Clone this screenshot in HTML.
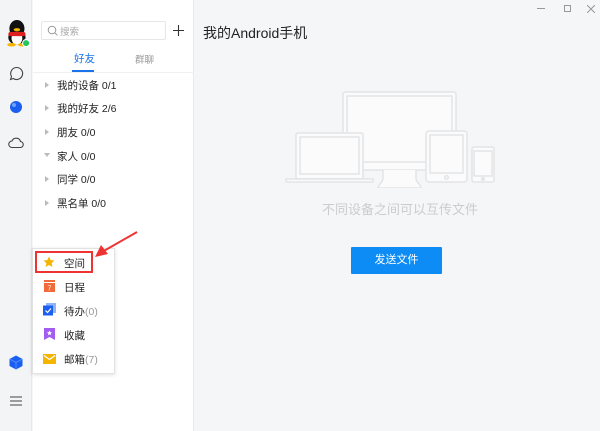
<!DOCTYPE html>
<html><head><meta charset="utf-8"><style>
*{margin:0;padding:0;box-sizing:border-box}
body{width:600px;height:431px;overflow:hidden;background:#f5f6f8;font-family:"Liberation Sans","Noto Sans CJK SC",sans-serif;position:relative;color:#222}
.abs{position:absolute}
#side{left:0;top:0;width:32px;height:431px;background:#f3f4f6;border-right:1px solid #e8e8e8}
#list{left:33px;top:0;width:161px;height:431px;background:#fff;border-right:1px solid #eaeaea}
.row{position:absolute;left:57px;font-size:10.5px;color:#222;white-space:nowrap}
.tri{position:absolute;left:45px;width:0;height:0;border-top:3px solid transparent;border-bottom:3px solid transparent;border-left:4px solid #bbb}
.mi{position:absolute;left:64px;font-size:10.5px;color:#222}
.mi span{color:#999}
</style></head><body>
<div id="side" class="abs"></div>
<div id="list" class="abs"></div>
<svg class="abs" style="left:5px;top:20px" width="26" height="28" viewBox="0 0 24 26">
<ellipse cx="11" cy="8" rx="7" ry="8" fill="#111"/>
<ellipse cx="11" cy="16" rx="8" ry="7" fill="#111"/>
<ellipse cx="11" cy="17" rx="5" ry="6" fill="#fff"/>
<rect x="3" y="11" width="16" height="4" rx="2" fill="#e02020"/>
<ellipse cx="11" cy="9" rx="3" ry="1.5" fill="#f5b400"/>
<ellipse cx="6" cy="23" rx="4" ry="1.6" fill="#f5b400"/>
<ellipse cx="16" cy="23" rx="4" ry="1.6" fill="#f5b400"/>
<circle cx="19.5" cy="21.5" r="3.3" fill="#22c55e" stroke="#fff" stroke-width="1"/>
</svg>
<svg class="abs" style="left:9px;top:66px" width="15" height="15" viewBox="0 0 15 15"><path d="M7.5 1.5a6 6 0 1 1-3.2 11L1.5 13.5l1-3A6 6 0 0 1 7.5 1.5z" fill="none" stroke="#444" stroke-width="1.1"/></svg>
<svg class="abs" style="left:9px;top:100px" width="14" height="14"><circle cx="7" cy="7" r="6" fill="#1a5ff0"/><circle cx="5" cy="5" r="2" fill="#6fa3ff"/></svg>
<svg class="abs" style="left:8px;top:136px" width="16" height="13" viewBox="0 0 16 13"><path d="M4 11.5h8a3 3 0 0 0 .5-6A4.5 4.5 0 0 0 4 5a3.2 3.2 0 0 0 0 6.5z" fill="none" stroke="#444" stroke-width="1.1"/></svg>
<svg class="abs" style="left:9px;top:355px" width="14" height="15" viewBox="0 0 14 15"><path d="M7 0.5L13.5 4v7L7 14.5 0.5 11V4z" fill="#1a5ff0"/><path d="M7 7.5L13.5 4M7 7.5L0.5 4M7 7.5v7" stroke="#4d8aff" stroke-width="1"/></svg>
<svg class="abs" style="left:10px;top:396px" width="12" height="10"><path d="M0 1h12M0 5h12M0 9h12" stroke="#444" stroke-width="1.1"/></svg>
<div class="abs" style="left:41px;top:21px;width:125px;height:19px;border:1px solid #e6e6e6;border-radius:2px;background:#fff"></div>
<svg class="abs" style="left:47px;top:25px" width="11" height="11"><circle cx="5" cy="5" r="3.8" fill="none" stroke="#999" stroke-width="1"/><path d="M7.8 7.8l2.5 2.5" stroke="#999"/></svg>
<div class="abs" style="left:60px;top:24px;font-size:9.5px;color:#aaa">搜索</div>
<svg class="abs" style="left:173px;top:25px" width="11" height="11"><path d="M5.5 0v11M0 5.5h11" stroke="#333" stroke-width="1.1"/></svg>
<div class="abs" style="left:74px;top:51px;font-size:10.5px;color:#1a73e8">好友</div>
<div class="abs" style="left:72px;top:70px;width:22px;height:2px;background:#1a73e8"></div>
<div class="abs" style="left:135px;top:52px;font-size:9.5px;color:#999">群聊</div>
<div class="abs" style="left:33px;top:72px;width:161px;height:1px;background:#f0f0f0"></div>
<div class="tri" style="top:82px"></div><div class="row" style="top:78px">我的设备 0/1</div>
<div class="tri" style="top:105px"></div><div class="row" style="top:101px">我的好友 2/6</div>
<div class="tri" style="top:129px"></div><div class="row" style="top:125px">朋友 0/0</div>
<div class="abs" style="left:44px;top:153px;border-left:3px solid transparent;border-right:3px solid transparent;border-top:4px solid #bbb"></div><div class="row" style="top:149px">家人 0/0</div>
<div class="tri" style="top:176px"></div><div class="row" style="top:172px">同学 0/0</div>
<div class="tri" style="top:200px"></div><div class="row" style="top:196px">黑名单 0/0</div>
<div class="abs" style="left:32px;top:248px;width:83px;height:126px;background:#fff;border:1px solid #e2e2e2;box-shadow:0 1px 4px rgba(0,0,0,.12)"></div>
<div class="abs" style="left:35px;top:251px;width:58px;height:22px;border:2px solid #e33"></div>
<svg class="abs" style="left:43px;top:256px" width="12" height="12" viewBox="0 0 12 12"><path d="M6 0.5l1.7 3.6 3.8.4-2.9 2.6.9 3.9L6 9 2.5 11l.9-3.9L.5 4.5l3.8-.4z" fill="#f5b400"/></svg>
<div class="mi" style="top:256px">空间</div>
<svg class="abs" style="left:44px;top:280px" width="11" height="12"><rect y="0" width="11" height="2" fill="#f06a3a"/><rect y="3" width="11" height="9" fill="#f06a3a"/><text x="3.5" y="10.5" font-size="7" fill="#fff" font-family="Liberation Sans">7</text></svg>
<div class="mi" style="top:280px">日程</div>
<svg class="abs" style="left:43px;top:303px" width="13" height="13"><rect x="3" y="0" width="10" height="10" fill="#8fb4f8"/><rect x="0" y="2.5" width="10" height="10" fill="#1a5ff0"/><path d="M2.5 7.5l2 2 3.5-4" stroke="#fff" fill="none" stroke-width="1.2"/></svg>
<div class="mi" style="top:304px">待办<span>(0)</span></div>
<svg class="abs" style="left:44px;top:328px" width="11" height="12"><path d="M0 0h11v12l-5.5-3L0 12z" fill="#a25cf0"/><path d="M5.5 2.5l.8 1.6 1.7.2-1.3 1.2.4 1.7-1.6-.9-1.6.9.4-1.7L3 4.3l1.7-.2z" fill="#fff"/></svg>
<div class="mi" style="top:328px">收藏</div>
<svg class="abs" style="left:43px;top:354px" width="13" height="10"><rect width="13" height="10" fill="#f5b400"/><path d="M1 1.5l5.5 4 5.5-4" stroke="#fff" fill="none" stroke-width="1.2"/></svg>
<div class="mi" style="top:352px">邮箱<span>(7)</span></div>
<svg class="abs" style="left:90px;top:228px" width="52" height="34"><path d="M47 4L12 24" stroke="#e33" stroke-width="2"/><path d="M5 29l6-12 7 9z" fill="#e33"/></svg>
<div class="abs" style="left:203px;top:23px;font-size:14px;color:#222">我的Android手机</div>
<div class="abs" style="left:537px;top:8px;width:8px;height:1px;background:#999"></div>
<div class="abs" style="left:564px;top:5px;width:7px;height:7px;border:1px solid #999"></div>
<svg class="abs" style="left:587px;top:5px" width="8" height="8"><path d="M0 0l8 8M8 0L0 8" stroke="#999"/></svg>
<svg class="abs" style="left:280px;top:88px" width="220" height="100" viewBox="0 0 220 100" fill="#fbfbfc" stroke="#e3e4e6" stroke-width="1.5">
<rect x="63" y="4" width="113" height="78" rx="2"/>
<rect x="67" y="8" width="105" height="66"/>
<path d="M103 82v8c0 5-5 6-5 10h43c0-4-5-5-5-10v-8"/>
<rect x="16" y="45" width="67" height="46" rx="2"/>
<rect x="20" y="49" width="59" height="37"/>
<path d="M6 91h87v3H6z"/>
<rect x="146" y="43" width="41" height="51" rx="3"/>
<rect x="150" y="47" width="33" height="38"/>
<circle cx="166.5" cy="89.5" r="1.8"/>
<rect x="192" y="59" width="22" height="35" rx="2"/>
<rect x="194" y="63" width="18" height="25"/>
<circle cx="203" cy="91" r="1.3"/>
</svg>
<div class="abs" style="left:280px;top:199px;width:240px;text-align:center;font-size:13px;color:#ccc">不同设备之间可以互传文件</div>
<div class="abs" style="left:351px;top:247px;width:91px;height:27px;background:#0d8cf5;color:#fff;font-size:11px;text-align:center;line-height:27px;border-radius:1px">发送文件</div>
</body></html>
